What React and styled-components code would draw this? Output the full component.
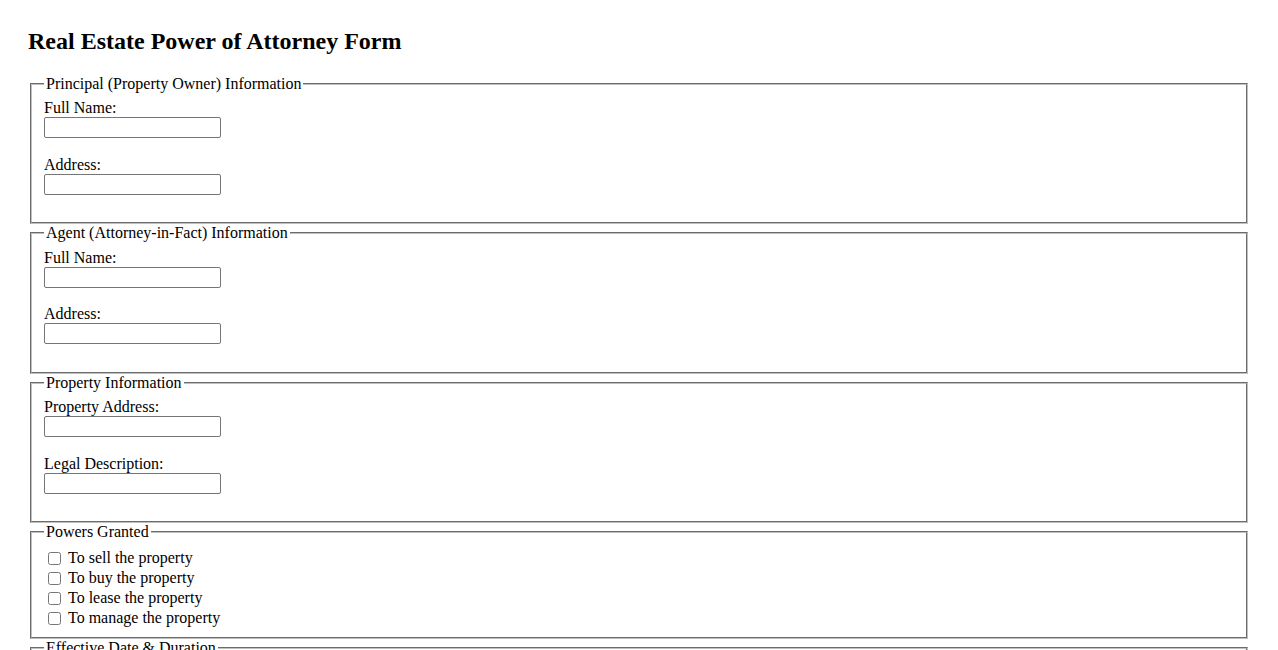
import React from "react";
import styled, { createGlobalStyle } from "styled-components";

const GlobalStyle = createGlobalStyle`
  html, body {
    margin: 0;
    padding: 0;
    background: #ffffff;
  }
  body {
    font-family: "Liberation Serif", "Times New Roman", serif;
    font-size: 16px;
    color: #000000;
  }
`;

const Page = styled.div`
  padding: 27.6px 28px 28px 28px;
`;

const Title = styled.h2`
  margin: 0 0 19.92px 0;
  font-size: 24px;
  font-weight: bold;
  line-height: normal;
`;

const Form = styled.form`
  display: block;
`;

const Fieldset = styled.fieldset`
  margin: 0 2px;
  padding: ${(p) => (p.$compact ? "7px 12px 8.6px 12px" : "6.6px 12px 10px 12px")};
  border: 2px groove rgb(192, 192, 192);
  min-inline-size: min-content;
`;

const Legend = styled.legend`
  padding: 0 2px;
  line-height: normal;
`;

const Field = styled.div`
  display: flex;
  flex-direction: column;
  align-items: flex-start;
  margin-bottom: 16.85px;
`;

const Label = styled.label`
  display: block;
  line-height: normal;
`;

const InputRow = styled.div`
  height: 21.7px;
`;

const TextInput = styled.input`
  box-sizing: border-box;
  width: 177px;
  height: 21px;
  margin: 0;
  padding: 1px 2px;
  border: 1px solid #767676;
  border-radius: 2px;
  font-family: Arial, "Liberation Sans", sans-serif;
  font-size: 13.33px;
  background: #ffffff;
`;

const CheckRow = styled.label`
  display: flex;
  align-items: center;
  height: 20px;
  line-height: normal;
`;

const Checkbox = styled.input`
  width: 13px;
  height: 13px;
  margin: 3px 7px 3px 4px;
`;

const sections = [
  {
    legend: "Principal (Property Owner) Information",
    fields: [
      { id: "principalName", label: "Full Name:" },
      { id: "principalAddress", label: "Address:" },
    ],
  },
  {
    legend: "Agent (Attorney-in-Fact) Information",
    fields: [
      { id: "agentName", label: "Full Name:" },
      { id: "agentAddress", label: "Address:" },
    ],
  },
  {
    legend: "Property Information",
    fields: [
      { id: "propertyAddress", label: "Property Address:" },
      { id: "legalDescription", label: "Legal Description:" },
    ],
  },
];

const powers = [
  "To sell the property",
  "To buy the property",
  "To lease the property",
  "To manage the property",
];

function TextSection({ legend, fields }) {
  return (
    <Fieldset>
      <Legend>{legend}</Legend>
      {fields.map((f) => (
        <Field key={f.id}>
          <Label htmlFor={f.id}>{f.label}</Label>
          <InputRow>
            <TextInput type="text" id={f.id} name={f.id} />
          </InputRow>
        </Field>
      ))}
    </Fieldset>
  );
}

export default function App() {
  return (
    <>
      <GlobalStyle />
      <Page>
        <Title>Real Estate Power of Attorney Form</Title>
        <Form onSubmit={(e) => e.preventDefault()}>
          {sections.map((s) => (
            <TextSection key={s.legend} legend={s.legend} fields={s.fields} />
          ))}
          <Fieldset $compact>
            <Legend>Powers Granted</Legend>
            {powers.map((p) => (
              <CheckRow key={p}>
                <Checkbox type="checkbox" name="powers" value={p} />
                {p}
              </CheckRow>
            ))}
          </Fieldset>
          <TextSection
            legend="Effective Date & Duration"
            fields={[
              { id: "startDate", label: "Effective Date:" },
              { id: "endDate", label: "Expiration Date:" },
            ]}
          />
        </Form>
      </Page>
    </>
  );
}
